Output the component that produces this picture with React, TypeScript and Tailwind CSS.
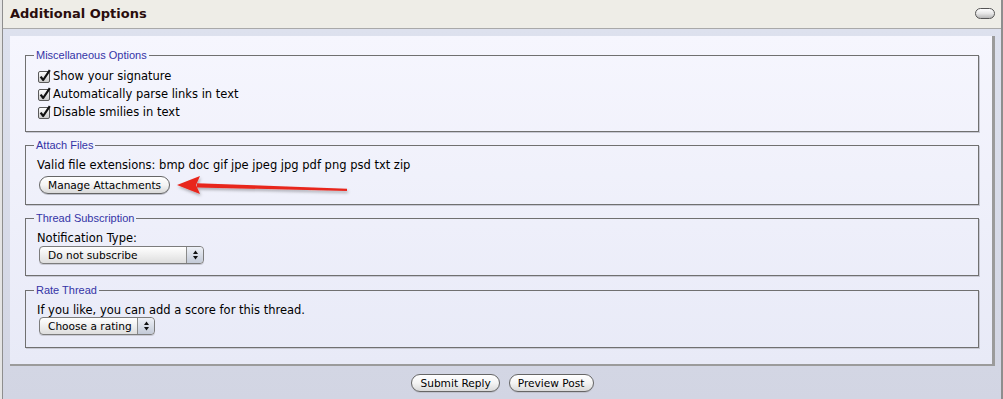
import React from "react";

const body = { fontFamily: '"DejaVu Sans", Verdana, sans-serif' };
const legendFont = { fontFamily: '"Liberation Sans", Arial, sans-serif' };

function Check() {
  return (
    <svg width="14" height="14" viewBox="0 0 14 14" className="shrink-0">
      <defs>
        <linearGradient id="cbg" x1="0" y1="0" x2="0" y2="1">
          <stop offset="0" stopColor="#ffffff" />
          <stop offset="1" stopColor="#c9c9c9" />
        </linearGradient>
      </defs>
      <rect x="0.5" y="2.5" width="11" height="11" rx="1.5" fill="url(#cbg)" stroke="#5a5a5a" />
      <path d="M2.6 7.6 L5.2 11 L11.8 1.2" fill="none" stroke="#111" strokeWidth="2.2" strokeLinejoin="round" />
    </svg>
  );
}

function Stepper() {
  return (
    <span className="flex h-full w-[17px] items-center justify-center border-l border-[#8a8a8a] bg-gradient-to-b from-[#eef1f7] to-[#c3cad7] rounded-r-[4px]">
      <svg width="7" height="10" viewBox="0 0 7 10">
        <path d="M3.5 0.5 L6 4 L1 4 Z" fill="#111" />
        <path d="M3.5 9.5 L6 6 L1 6 Z" fill="#111" />
      </svg>
    </span>
  );
}

function Select({ label, w }: { label: string; w: string }) {
  return (
    <div
      className={`flex h-[18px] ${w} items-center justify-between rounded-[4px] border border-[#7c7c7c] bg-gradient-to-b from-[#ffffff] to-[#dedede] shadow-[0_1px_0_#c9cad4]`}
    >
      <span className="pl-[8px] text-[10.6px] leading-none text-black">{label}</span>
      <Stepper />
    </div>
  );
}

function Btn({ children }: { children: React.ReactNode }) {
  return (
    <button className="flex h-[18px] items-center rounded-full border border-[#666] bg-gradient-to-b from-[#ffffff] via-[#f4f4f4] to-[#d9d9d9] px-[8px] text-[10.6px] leading-none text-black shadow-[0_1px_0_#bfc1cc]">
      {children}
    </button>
  );
}

function Field({
  title,
  children,
  cls,
}: {
  title: string;
  children: React.ReactNode;
  cls: string;
}) {
  return (
    <fieldset className={`border border-[#707070] pl-[8px] shadow-[1px_1px_0_#c8c9d4] ${cls}`}>
      <legend className="px-[2px] text-[11px] leading-[14px] text-[#3434a6]" style={legendFont}>
        {title}
      </legend>
      <div className="pl-[3px]">{children}</div>
    </fieldset>
  );
}

export default function App() {
  return (
    <div className="relative h-[399px] w-[1003px] overflow-hidden bg-[#e4e4e4]" style={body}>
      <div className="ml-[2px] flex h-[399px] w-[1001px] flex-col border-l border-r-2 border-[#8e8e8e]">
        <div className="flex h-[29px] items-center justify-between border-b border-[#a9a9a9] bg-[#eeede7] pl-[7px] pr-[6px]">
          <span className="text-[13px] font-bold text-[#2a0d0d]">Additional Options</span>
          <span className="mt-[-2px] h-[11px] w-[20px] rounded-full border border-[#555] bg-gradient-to-b from-[#ffffff] via-[#e6e6e6] to-[#b8b8b8]" />
        </div>
        <div className="flex flex-1 flex-col bg-gradient-to-b from-[#dde1ee] to-[#d2d5e3] pl-[7px] pr-[6px] pt-[7px]">
          <div className="flex flex-col border-b-2 border-r-[3px] border-[#9b9b9b] bg-gradient-to-b from-[#f6f6fe] to-[#e8eaf7] pb-[16px] pl-[15px] pr-[13px] pt-[12px]">
            <Field title="Miscellaneous Options" cls="pt-[6px] pb-[9px] mb-[6px]">
              <div className="text-[11.5px] text-black">
                {["Show your signature", "Automatically parse links in text", "Disable smilies in text"].map((t) => (
                  <div key={t} className="flex h-[18px] items-center">
                    <span className="ml-[1px] mt-[-3px]">
                      <Check />
                    </span>
                    <span className="ml-[1px]">{t}</span>
                  </div>
                ))}
              </div>
            </Field>
            <Field title="Attach Files" cls="pt-[6px] pb-[10px] mb-[6px]">
              <div className="text-[11.5px] leading-[14px] text-black">
                Valid file extensions: bmp doc gif jpe jpeg jpg pdf png psd txt zip
              </div>
              <div className="mt-[4px] flex pl-[2px]">
                <Btn>Manage Attachments</Btn>
              </div>
            </Field>
            <Field title="Thread Subscription" cls="pt-[6px] pb-[11px] mb-[7px]">
              <div className="text-[11.5px] leading-[14px] text-black">Notification Type:</div>
              <div className="mt-[1px] pl-[2px]">
                <Select label="Do not subscribe" w="w-[165px]" />
              </div>
            </Field>
            <Field title="Rate Thread" cls="pt-[6px] pb-[12px]">
              <div className="text-[11.5px] leading-[14px] text-black">If you like, you can add a score for this thread.</div>
              <div className="pl-[2px]">
                <Select label="Choose a rating" w="w-[116px]" />
              </div>
            </Field>
          </div>
          <div className="flex justify-center gap-[9px] pt-[8px]">
            <Btn>Submit Reply</Btn>
            <Btn>Preview Post</Btn>
          </div>
        </div>
      </div>
      <svg className="pointer-events-none absolute left-0 top-0" width="1003" height="399" viewBox="0 0 1003 399">
        <defs>
          <filter id="sh" x="-10%" y="-50%" width="120%" height="200%">
            <feDropShadow dx="1" dy="2" stdDeviation="1.5" floodColor="#000" floodOpacity="0.3" />
          </filter>
        </defs>
        <g filter="url(#sh)">
          <path d="M197 183.2 L347 188.8 L347 191 L197 187.4 Z" fill="#e8261c" />
          <path d="M177 185 L200 176 L196 185 L200 194 Z" fill="#e8261c" />
        </g>
      </svg>
    </div>
  );
}
